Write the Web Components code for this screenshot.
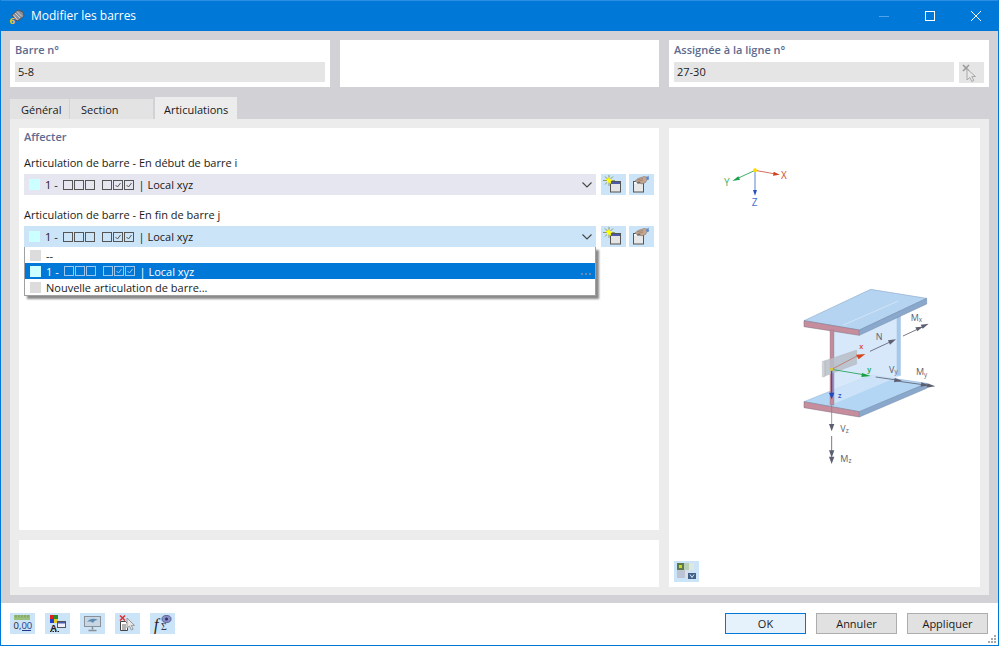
<!DOCTYPE html>
<html lang="fr">
<head>
<meta charset="utf-8">
<title>Modifier les barres</title>
<style>
  html, body { margin: 0; height: 100%; background: #fff; }
  body { font: 11px "Open Sans", "Noto Sans", sans-serif; color: #1a1a1a; }
</style>
</head>
<body>

<rf-dialog heading="Modifier les barres">
  <rf-field-card slot="top" label="Barre n°" value="5-8"></rf-field-card>
  <rf-field-card slot="top"></rf-field-card>
  <rf-field-card slot="top" label="Assignée à la ligne n°" value="27-30" pick></rf-field-card>

  <rf-tabs slot="tabs" items="Général,Section,Articulations" active="2"></rf-tabs>

  <rf-pane slot="main" heading="Affecter">
    <rf-hinge-row label="Articulation de barre - En début de barre i"></rf-hinge-row>
    <rf-hinge-row label="Articulation de barre - En fin de barre j" open></rf-hinge-row>
  </rf-pane>
  <rf-pane slot="note"></rf-pane>
  <rf-preview slot="preview"></rf-preview>

  <rf-icon-btn slot="tools" icon="units"></rf-icon-btn>
  <rf-icon-btn slot="tools" icon="colors"></rf-icon-btn>
  <rf-icon-btn slot="tools" icon="monitor"></rf-icon-btn>
  <rf-icon-btn slot="tools" icon="docpick"></rf-icon-btn>
  <rf-icon-btn slot="tools" icon="formula"></rf-icon-btn>

  <rf-button slot="actions" primary>OK</rf-button>
  <rf-button slot="actions">Annuler</rf-button>
  <rf-button slot="actions">Appliquer</rf-button>
</rf-dialog>

<script>
const ICONS = {
  star: `<path d="M8 1v4M8 8v4M2 6.500h4M10 6.500h4M4 2.500l2.500 2.500M12 2.500l-2.500 2.500M4 10.500l2.500-2.500" stroke="#8f9a70" fill="none"/>
    <rect x="9.500" y="7.500" width="10" height="10.500" fill="#e4e4e4" stroke="#555"/><rect x="10" y="8" width="9" height="2" fill="#4a5aa8"/>
    <path d="M8 3l1.200 2.300 2.300.5-1.700 1.700.3 2.500L8 8.300 5.900 9.500l.3-2.500L4.500 5.300l2.300-.5z" fill="#ff0"/>`,
  hand: `<rect x="4.500" y="7.500" width="10" height="10.500" fill="#e8e8e8" stroke="#555"/><rect x="5" y="8" width="3" height="1.500" fill="#fff"/><rect x="8" y="8" width="6" height="1.500" fill="#555"/>
    <path d="M6 7l3-2.500 6-2 3 .5.500 2-2 3.500-4 1.500-2-2-2.500.5z" fill="#c4a690" stroke="#8d7a70" stroke-width=".6"/>
    <path d="M8 6l6-1.500M9 7.500l5-1.500" stroke="#8d7565" stroke-width=".6"/><path d="M17 4l2.500-2.500L20 5.500l-2 .5z" fill="#5a8ad0"/>`,
  cursor: `<path d="M4 3l6 6M10 3l-6 6" stroke="#999" stroke-width="1.600"/><path d="M8 7v11l2.800-2.500 2 4 2-1-2-4h3.700z" fill="#e8e8e8" stroke="#a8a8a8"/>`,
  units: `<rect x="4" y="2" width="16" height="5" fill="#9bc07c"/><path d="M6 2v2.500M9 2v2.500M12 2v2.500M15 2v2.500M18 2v2.500" stroke="#74975a"/>
    <text x="3.500" y="16" font-family="Open Sans, sans-serif" font-size="9.500" fill="#222">0,<tspan fill="#1f3a8a">00</tspan></text><path d="M12 17.500h9" stroke="#1f3a8a"/>`,
  colors: `<rect x="5" y="2" width="4" height="4" fill="#e02020"/><rect x="9" y="2" width="4" height="4" fill="#2a8a2a"/><rect x="5" y="6" width="4" height="4" fill="#2040c8"/><rect x="9" y="6" width="4" height="4" fill="#e8d020"/>
    <text x="5.500" y="17.500" font-family="Open Sans, sans-serif" font-weight="700" font-size="9" fill="#222">A</text><path d="M5 18.500h9" stroke="#222" stroke-dasharray="1.500 1"/>
    <rect x="12.500" y="8.500" width="8" height="6" fill="#eef" stroke="#555"/><rect x="13" y="9" width="7" height="1.500" fill="#4a5aa8"/>`,
  monitor: `<rect x="4.500" y="3.500" width="16" height="10" fill="#c6d6e4" stroke="#8a9098"/><path d="M7 9c3-4 7-4 11-2-3 0-4 1-5 3-1-1-3-2-6-1z" fill="#5e8cb0"/><path d="M12.500 13.500v3M8.500 17.500h8" stroke="#8a9098" stroke-width="1.500"/>`,
  docpick: `<path d="M5 2.500l5 5M10 2.500l-5 5" stroke="#e03030" stroke-width="1.600"/><path d="M5.500 8.500h5l2 2v7h-7z" fill="#fff" stroke="#444"/><path d="M7 12h4M7 14h4M7 16h4" stroke="#444" stroke-width=".8"/>
    <path d="M12 5v10l2.500-2 1.800 4 1.800-.8-1.800-3.800h3.200z" fill="#e8e8e8" stroke="#9a9a9a"/>`,
  formula: `<text x="4" y="17" font-family="Liberation Serif, serif" font-style="italic" font-size="16" fill="#222">f</text>
    <text x="11" y="17" font-family="Liberation Serif, serif" font-size="10" fill="#3a3a4a">Σ</text>
    <ellipse cx="16.500" cy="6" rx="4.500" ry="3.500" fill="#8a90c8" stroke="#5a5f90"/><circle cx="16.500" cy="6" r="1.500" fill="#2a2f60"/>`,
  view: `<rect x="3" y="2" width="7" height="7" fill="#5c7a4a"/><rect x="5" y="4" width="3" height="3" fill="#c8d830"/><rect x="10" y="2" width="5" height="7" fill="#b8d0b8"/><rect x="15" y="2" width="5" height="7" fill="#dde8e0"/>
    <rect x="3" y="9" width="8" height="8" fill="#bcc4d4"/><rect x="11" y="9" width="5" height="8" fill="#d8deea"/><rect x="14" y="12" width="8" height="6" fill="#3f5f88"/><path d="M16 13.500l2 3 2-3" stroke="#dfe8f4" fill="none"/>`
};

class RfDialog extends HTMLElement {
  constructor() {
    super();
    this.attachShadow({ mode: 'open' }).innerHTML = `
      <style>
        :host { display: flex; flex-direction: column; width: 999px; height: 646px; box-sizing: border-box; border: 1px solid #0078d7; border-top: 0; background: #fff; overflow: hidden; }
        .title { display: flex; align-items: center; height: 31px; flex: none; background: #0078d7; color: #fff; font-size: 12px; margin: 0 -1px; border-top: 1px solid #2b8ee0; box-sizing: border-box; }
        .logo { width: 16px; height: 16px; margin: 0 6px 0 9px; }
        .title span { flex: 1; position: relative; top: -.5px; }
        .win { display: flex; }
        .win svg { width: 46px; height: 30px; }
        .body { flex: none; height: 572px; background: #d2d1d6; padding: 9px 9px 0; box-sizing: border-box; }
        .top { display: grid; grid-template-columns: 320px 319px 320px; column-gap: 10px; height: 47px; }
        .tabs { margin-top: 10px; height: 22px; }
        .panel { background: #ececec; height: 476px; padding: 9px 9px 8px; box-sizing: border-box; display: grid; grid-template-columns: 640px 311px; grid-template-rows: 402px 47px; gap: 10px; }
        .preview { grid-column: 2; grid-row: 1 / 3; display: grid; }
        .foot { flex: 1; display: flex; justify-content: space-between; padding: 10px 0 0 9px; position: relative; }
        .tools { display: flex; gap: 10px; height: 21px; }
        .actions { display: flex; gap: 10px; height: 21px; padding-right: 10px; }
        .grip { position: absolute; right: 1px; bottom: 1px; width: 9px; height: 9px; }
      </style>
      <div class="title">
        <svg class="logo" viewBox="0 0 16 16">
          <path d="M3 7l6-5 5 2 1 4-6 5-3-1z" fill="#8a8e98" stroke="#555"/>
          <path d="M6 5l5 5M8 3.500l5 5M4.500 7l4 5" stroke="#dfe2e8" stroke-width=".8"/>
          <text x=".5" y="15.500" font-family="Open Sans, sans-serif" font-weight="700" font-size="9.500" fill="#f4c430">6</text>
        </svg>
        <span></span>
        <div class="win">
          <svg viewBox="0 0 46 30"><path d="M18 15.500h10" stroke="#4fa3e6"/></svg>
          <svg viewBox="0 0 46 30"><rect x="18.500" y="10.500" width="9" height="9" fill="none" stroke="#fff"/></svg>
          <svg viewBox="0 0 46 30"><path d="M18 10l10 10M28 10L18 20" stroke="#fff"/></svg>
        </div>
      </div>
      <div class="body">
        <div class="top"><slot name="top"></slot></div>
        <div class="tabs"><slot name="tabs"></slot></div>
        <div class="panel">
          <slot name="main"></slot>
          <div class="preview"><slot name="preview"></slot></div>
          <slot name="note"></slot>
        </div>
      </div>
      <div class="foot">
        <div class="tools"><slot name="tools"></slot></div>
        <div class="actions"><slot name="actions"></slot></div>
        <svg class="grip" viewBox="0 0 9 9" fill="#a8a8a8">
          <rect x="6" y="0" width="2" height="2"/><rect x="3" y="3" width="2" height="2"/><rect x="6" y="3" width="2" height="2"/>
          <rect x="0" y="6" width="2" height="2"/><rect x="3" y="6" width="2" height="2"/><rect x="6" y="6" width="2" height="2"/>
        </svg>
      </div>`;
    this.shadowRoot.querySelector('.title span').textContent = this.getAttribute('heading');
  }
}
customElements.define('rf-dialog', RfDialog);

class RfFieldCard extends HTMLElement {
  constructor() {
    super();
    const label = this.getAttribute('label');
    const value = this.getAttribute('value');
    this.attachShadow({ mode: 'open' }).innerHTML = `
      <style>
        :host { display: block; background: #fff; padding: 3px 5px 0; box-sizing: border-box; }
        .label { height: 16px; line-height: 14px; color: #5c6b8f; font-weight: 600; }
        .row { display: flex; gap: 5px; margin-top: 3px; }
        .value { flex: 1; height: 20px; line-height: 20px; background: #e5e5e5; padding-left: 3px; color: #1a1a1a; }
        .pick { width: 25px; height: 21px; background: #e5e5e5; }
      </style>
      ${label ? `<div class="label">${label}</div>
      <div class="row">
        <div class="value">${value}</div>
        ${this.hasAttribute('pick') ? `<svg class="pick" viewBox="0 0 25 21">${ICONS.cursor}</svg>` : ''}
      </div>` : ''}`;
  }
}
customElements.define('rf-field-card', RfFieldCard);

class RfTabs extends HTMLElement {
  constructor() {
    super();
    const active = Number(this.getAttribute('active'));
    const tabs = this.getAttribute('items').split(',').map((t, i) =>
      `<div class="tab ${i === active ? 'on' : ''}">${t}</div>`).join('');
    this.attachShadow({ mode: 'open' }).innerHTML = `
      <style>
        :host { display: flex; align-items: flex-end; height: 22px; }
        .tab { height: 20px; line-height: 21px; padding: 0 11px; margin-right: 1px; background: #e3e3e3; box-sizing: border-box; }
        .tab.on { height: 22px; line-height: 25px; background: #ececec; padding: 0 9px; margin-left: 1px; }
        .tab:nth-child(1) { width: 61px; padding: 0 0 0 11px; }
        .tab:nth-child(2) { width: 59px; }
        .tab:nth-child(3) { width: 83px; }
      </style>${tabs}`;
  }
}
customElements.define('rf-tabs', RfTabs);

class RfPane extends HTMLElement {
  constructor() {
    super();
    const heading = this.getAttribute('heading');
    this.attachShadow({ mode: 'open' }).innerHTML = `
      <style>
        :host { display: block; background: #fff; padding: 2px 5px 0; box-sizing: border-box; min-width: 0; }
        .heading { height: 14px; line-height: 14px; color: #5c6b8f; font-weight: 600; margin-bottom: 12px; }
        .rows { display: flex; flex-direction: column; gap: 13px; }
      </style>
      ${heading ? `<div class="heading">${heading}</div>` : ''}
      <div class="rows"><slot></slot></div>`;
  }
}
customElements.define('rf-pane', RfPane);

// 1 - ☐☐☐ ☐☑☑ | Local xyz, with its colour swatch
class RfHingeValue extends HTMLElement {
  constructor() {
    super();
    const box = on => `<i>${on ? '<svg viewBox="0 0 8 8"><path d="M1.500 4l2 2 3-4" fill="none" stroke="currentColor"/></svg>' : ''}</i>`;
    const text = this.getAttribute('text');
    this.attachShadow({ mode: 'open' }).innerHTML = `
      <style>
        :host { display: flex; align-items: center; height: 100%; }
        .swatch { width: 11px; height: 11px; margin: 0 5px 0 5px; flex: none; background: var(--swatch, #ccffff); }
        .boxes { display: flex; gap: 1px; margin-left: 2px; }
        .boxes + .boxes { margin-left: 7px; }
        i { display: block; width: 8px; height: 8px; border: 1px solid var(--box, #555); box-sizing: content-box; }
        i svg { display: block; width: 8px; height: 8px; color: var(--box, #555); }
        .pipe { margin-left: 5px; white-space: pre; }
      </style>
      <span class="swatch"></span>
      ${text ? `<span>${text}</span>` : `<span style="white-space:pre">1 - </span>
      <span class="boxes">${box(0)}${box(0)}${box(0)}</span>
      <span class="boxes">${box(0)}${box(1)}${box(1)}</span>
      <span class="pipe">| Local xyz</span>`}`;
  }
}
customElements.define('rf-hinge-value', RfHingeValue);

class RfHingeRow extends HTMLElement {
  constructor() {
    super();
    const open = this.hasAttribute('open');
    this.attachShadow({ mode: 'open' }).innerHTML = `
      <style>
        :host { display: block; position: relative; }
        .label { height: 14px; line-height: 14px; margin-bottom: 4px; }
        .row { display: flex; height: 21px; }
        .combo { width: 572px; height: 21px; display: flex; background: ${open ? '#cce4f7' : '#e6e6f0'}; margin-right: 5px; position: relative; }
        .combo rf-hinge-value { flex: 1; }
        .combo svg { width: 10px; height: 6px; position: absolute; right: 4px; top: 8px; }
        rf-icon-btn + rf-icon-btn { margin-left: 3px; }
        .list { position: absolute; left: 0; top: 39px; width: 570px; height: 48px; background: #fff; border: 1px solid #a0a0a0; border-top: 0; box-shadow: 3px 3px 2px #8a8a8a; z-index: 2; }
        .list div { height: 16px; position: relative; }
        .list .sel { background: #0078d7; color: #fff; --box: #9cc8f0; }
        .list .off { --swatch: #dcdcdc; }
        .dots { position: absolute; right: 4px; top: 10px; width: 10px; border-top: 2px dotted #6a8cb0; }
      </style>
      <div class="label">${this.getAttribute('label')}</div>
      <div class="row">
        <div class="combo">
          <rf-hinge-value></rf-hinge-value>
          <svg viewBox="0 0 10 6"><path d="M.5.500L5 5 9.500.500" fill="none" stroke="#444" stroke-width="1.100"/></svg>
        </div>
        <rf-icon-btn icon="star"></rf-icon-btn>
        <rf-icon-btn icon="hand"></rf-icon-btn>
      </div>
      ${open ? `<div class="list">
        <div class="off"><rf-hinge-value text="--"></rf-hinge-value></div>
        <div class="sel"><rf-hinge-value></rf-hinge-value><span class="dots"></span></div>
        <div class="off"><rf-hinge-value text="Nouvelle articulation de barre..."></rf-hinge-value></div>
      </div>` : ''}`;
  }
}
customElements.define('rf-hinge-row', RfHingeRow);

class RfIconBtn extends HTMLElement {
  constructor() {
    super();
    this.attachShadow({ mode: 'open' }).innerHTML = `
      <style>
        :host { display: block; width: 25px; height: 21px; flex: none; background: #cce4f7; }
        svg { display: block; width: 25px; height: 21px; }
      </style>
      <svg viewBox="0 0 25 21">${ICONS[this.getAttribute('icon')]}</svg>`;
  }
}
customElements.define('rf-icon-btn', RfIconBtn);

class RfButton extends HTMLElement {
  constructor() {
    super();
    this.attachShadow({ mode: 'open' }).innerHTML = `
      <style>
        :host { display: block; width: 81px; height: 21px; box-sizing: border-box; text-align: center; line-height: 19px; background: #e1e1e1; border: 1px solid #adadad; color: #1a1a1a; }
        :host([primary]) { background: #e5f1fb; border-color: #0078d7; }
      </style>
      <slot></slot>`;
  }
}
customElements.define('rf-button', RfButton);

class RfPreview extends HTMLElement {
  constructor() {
    super();
    this.attachShadow({ mode: 'open' }).innerHTML = `
      <style>
        :host { display: block; background: #fff; position: relative; overflow: hidden; }
        svg { position: absolute; }
        .axes { left: 36px; top: 27px; }
        .beam { left: 111px; top: 152px; }
        rf-icon-btn { position: absolute; left: 5px; bottom: 5px; }
        text { font-family: "Open Sans", sans-serif; }
      </style>
      <svg class="axes" width="100" height="60" viewBox="0 0 300 180">
        <path d="M150 46L92 73" stroke="#3fae6a" stroke-width="3"/><path d="M82 78l18-14 5 10z" fill="#17a34a"/>
        <path d="M150 46l62 11" stroke="#d8705a" stroke-width="3"/><path d="M224 59l-18-9-2 12z" fill="#d0401a"/>
        <path d="M150 46v66" stroke="#9db4e4" stroke-width="5"/><path d="M150 122l-6-17h12z" fill="#2a50c0"/>
        <circle cx="150" cy="46" r="6" fill="#ffd800"/>
        <text x="228" y="72" font-size="30" fill="#d0502a">X</text>
        <text x="57" y="92" font-size="30" fill="#3fae6a">Y</text>
        <text x="140" y="153" font-size="30" fill="#4a70d0">Z</text>
      </svg>
      <svg class="beam" width="170" height="190" viewBox="0 0 510 570">
        <defs><filter id="b"><feGaussianBlur stdDeviation=".9"/></filter></defs>
        <g filter="url(#b)">
          <!-- bottom flange -->
          <path d="M72 365L272 285 440 310 238 395z" fill="#b4d6f5" stroke="#8aa8c8" stroke-width="1.500"/>
          <path d="M72 365l166 30v16L72 383z" fill="#c68d9d" stroke="#7a6f80" stroke-width="1.500"/>
          <path d="M238 395l202-85v15L238 411z" fill="#8aa8cc" stroke="#7088a8" stroke-width="1.500"/>
          <!-- web -->
          <path d="M160 150L350 72h12v215L160 372z" fill="#cfe4f9" fill-opacity=".85"/>
          <path d="M350 72h12v215h-12z" fill="#a8c8e8"/>
          <!-- top flange -->
          <path d="M72 122L272 28 440 55 238 150z" fill="#b4d4f2" stroke="#7f9cc0" stroke-width="1.500"/>
          <path d="M190 135l165-72" stroke="#d3e4f5" stroke-width="3"/>
          <path d="M72 122l166 28v16L72 140z" fill="#c68d9d" stroke="#7a6f80" stroke-width="1.500"/>
          <path d="M238 150L440 55v17L238 166z" fill="#8aa8cc" stroke="#7088a8" stroke-width="1.500"/>
          <path d="M150 150h12v225h-12z" fill="#c28b9c" stroke="#8a7a88"/>
          <!-- end plate -->
          <path d="M127 244l8-2v48l-8 1z" fill="#d0d2d6" stroke="#a8aab0"/>
          <path d="M135 242l95-32v42l-95 36z" fill="#b8bec8" fill-opacity=".85" stroke="#a8aab0"/>
          <!-- local axes -->
          <path d="M155 268l80-42" stroke="#c06050" stroke-width="2"/><path d="M256 222l-28 2 8 14z" fill="#d8451a"/>
          <path d="M155 268l95 16" stroke="#20a050" stroke-width="2.500"/><path d="M272 288l-26-9-2 12z" fill="#15a040"/>
          <path d="M155 268v72" stroke="#2a55c8" stroke-width="4"/><path d="M155 358l-8-20h16z" fill="#1a48c0"/>
          <circle cx="155" cy="268" r="5" fill="#d8c830"/>
          <!-- internal forces -->
          <g stroke="#5d5f70" stroke-width="2.500" fill="#5d5f70">
            <path d="M270 214l60-28"/><path d="M348 178l-24 3 6 13z" stroke="none"/>
            <path d="M369 168l60-28"/><path d="M428 140l-22 2 6 12z" stroke="none"/><path d="M446 131l-24 3 6 12z" stroke="none"/>
            <path d="M287 291l70 10"/><path d="M366 302l-22-8-2 13z" stroke="none"/>
            <path d="M350 303l100 14"/><path d="M446 316l-22-9-2 13z" stroke="none"/><path d="M466 319l-24-9-2 13z" stroke="none"/>
            <path d="M155 375v65" stroke="#85868f"/><path d="M155 454l-8-22h16z" stroke="none"/>
            <path d="M155 468v55"/><path d="M155 533l-8-22h16z" stroke="none"/><path d="M155 552l-8-22h16z" stroke="none"/>
          </g>
        </g>
        <g fill="#5d5f70" font-size="27">
          <text x="287" y="180">N</text>
          <text x="392" y="122">M<tspan font-size="19" dy="4">x</tspan></text>
          <text x="327" y="279">V<tspan font-size="19" dy="4">y</tspan></text>
          <text x="408" y="286">M<tspan font-size="19" dy="4">y</tspan></text>
          <text x="181" y="456">V<tspan font-size="19" dy="4">z</tspan></text>
          <text x="181" y="546">M<tspan font-size="19" dy="4">z</tspan></text>
          <text x="238" y="207" fill="#d8451a" font-size="22" font-weight="600">x</text>
          <text x="262" y="275" fill="#15a040" font-size="22" font-weight="600">y</text>
          <text x="174" y="355" fill="#2a55c8" font-size="22" font-weight="600">z</text>
        </g>
      </svg>
      <rf-icon-btn icon="view"></rf-icon-btn>`;
  }
}
customElements.define('rf-preview', RfPreview);
</script>
</body>
</html>
